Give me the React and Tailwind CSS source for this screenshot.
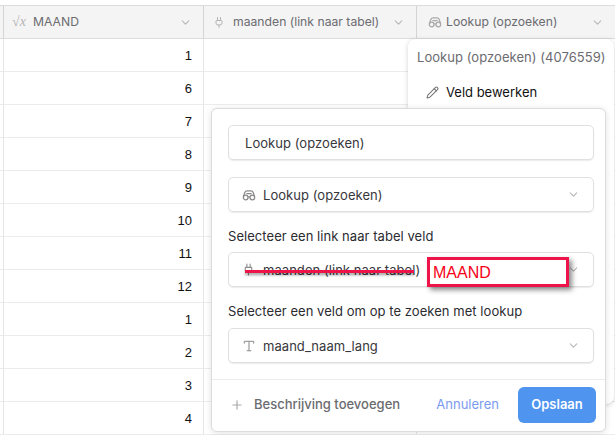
import React from 'react';
import { ChevronDown, Plug, Pencil, Plus, Type } from 'lucide-react';

const rows = [1, 6, 7, 8, 9, 10, 11, 12, 1, 2, 3, 4];

const Binoculars = ({ className }) => (
    <svg viewBox="0 0 16 16" fill="none" stroke="currentColor" strokeWidth="1.4" className={className}>
        <circle cx="4.2" cy="10.8" r="2.7" />
        <circle cx="11.8" cy="10.8" r="2.7" />
        <path d="M6.9 10.4c.7-.4 1.5-.4 2.2 0M1.6 10 3.2 5.2C3.6 4 4.5 3.4 6 3.4h4c1.5 0 2.4.6 2.8 1.8L14.4 10M5 6.4h6" />
    </svg>
);

const HeaderCell = ({ icon, label, className }) => (
    <div className={`flex items-center h-full border-r border-[#d4d4d4] pl-[9px] ${className}`}>
        <span className="w-[12px] h-[14px] mr-[8px] flex items-center justify-center text-[#b4b4b4] shrink-0">{icon}</span>
        <span className="flex-1 text-[12.2px] text-[#6b6b70] whitespace-nowrap">{label}</span>
        <ChevronDown size={13} className="text-[#b8b8b8]" />
    </div>
);

const SelectBox = ({ icon, label, className = '' }) => (
    <div className={`h-[35px] flex items-center rounded-[5px] border border-[#e0e0e0] shadow-[0_1px_1px_rgba(0,0,0,0.08)] pl-[12px] pr-[13px] ${className}`}>
        <span className="w-[15px] mr-[7px] text-[#8a8a8a] flex justify-center shrink-0">{icon}</span>
        <span className="flex-1 text-[13px] tracking-[0.05px] text-[#37373c] whitespace-nowrap pt-[2px]">{label}</span>
        <ChevronDown size={13} className="text-[#b8b8b8]" />
    </div>
);

export default function App() {
    return (
        <div className="relative w-[615px] h-[435px] overflow-hidden bg-white font-['Inter',sans-serif]">
            {/* Table */}
            <div className="pt-[5px]">
                <div className="flex h-[34px] bg-[#f4f4f4] border-y border-[#dcdcdc]">
                    <div className="w-[4px] h-full border-r border-[#d4d4d4]" />
                    <HeaderCell
                        className="w-[200px] pr-[11px]"
                        icon={<span className="font-['Liberation_Serif',serif] text-[14px] leading-none whitespace-nowrap">√<i>x</i></span>}
                        label="MAAND"
                    />
                    <HeaderCell className="w-[213px] pr-[11px]" icon={<Plug size={13} />} label="maanden (link naar tabel)" />
                    <div className="flex-1 flex items-center h-full pl-[11px] pr-[11px]">
                        <Binoculars className="w-[14px] h-[14px] text-[#a8a8a8] mr-[4px]" />
                        <span className="flex-1 text-[12.2px] text-[#6b6b70]">Lookup (opzoeken)</span>
                        <ChevronDown size={13} className="text-[#b8b8b8]" />
                    </div>
                </div>
                {rows.map((n, i) => (
                    <div key={i} className="flex h-[33px] border-b border-[#ececec]">
                        <div className="w-[4px] h-full border-r border-[#e6e6e6]" />
                        <div className="w-[200px] h-full border-r border-[#e6e6e6] flex items-center justify-end pt-[2px] pr-[11px] text-[13px] text-[#111] font-['Liberation_Sans',sans-serif]">
                            {n}
                        </div>
                        <div className="w-[213px] h-full border-r border-[#e6e6e6]" />
                    </div>
                ))}
            </div>

            {/* Column menu behind the dialog */}
            <div className="absolute left-[408px] top-[39px] w-[206px] h-[365px] bg-white rounded-[8px] shadow-[0_1px_5px_rgba(0,0,0,0.18)] pl-[9px] pt-[9px]">
                <div className="text-[13px] tracking-[0.05px] text-[#6b6b70] whitespace-nowrap">Lookup (opzoeken) (4076559)</div>
                <div className="flex items-center mt-[15px] pl-[9px]">
                    <Pencil size={13} className="text-[#77777a] mr-[7px]" />
                    <span className="text-[13px] text-[#111]">Veld bewerken</span>
                </div>
            </div>

            {/* Dialog */}
            <div className="absolute left-[211px] top-[108px] w-[395px] h-[324px] bg-white rounded-[6px] border border-[#dcdcdc] shadow-[0_1px_6px_rgba(0,0,0,0.12)] flex flex-col">
                <div className="pl-[16px] pr-[11px] pt-[16px] flex-1">
                    <div className="h-[35px] flex items-center rounded-[5px] border border-[#e0e0e0] shadow-[0_1px_1px_rgba(0,0,0,0.08)] pl-[16px] pt-[2px] text-[13px] tracking-[0.05px] text-[#37373c]">
                        Lookup (opzoeken)
                    </div>
                    <SelectBox className="mt-[17px]" icon={<Binoculars className="w-[14px] h-[14px]" />} label="Lookup (opzoeken)" />
                    <div className="mt-[16px] text-[13px] tracking-[0.05px] leading-[16px] text-[#2b2b30]">Selecteer een link naar tabel veld</div>
                    <SelectBox className="mt-[8px]" icon={<Plug size={13} />} label="maanden (link naar tabel)" />
                    <div className="mt-[16px] text-[13px] tracking-[0.05px] leading-[16px] text-[#2b2b30]">Selecteer een veld om op te zoeken met lookup</div>
                    <SelectBox className="mt-[9px]" icon={<Type size={14} strokeWidth={2.2} className="text-[#a0a0a0]" />} label="maand_naam_lang" />
                </div>
                <div className="h-[52px] border-t border-[#ececec] flex items-center pb-[2px] pl-[18px] pr-[9px]">
                    <Plus size={14} className="text-[#a8a8a8] mr-[10px]" />
                    <span className="flex-1 text-[13px] font-medium text-[#6b6b70]">Beschrijving toevoegen</span>
                    <span className="text-[13px] text-[#7b9bf0] mr-[19px]">Annuleren</span>
                    <button className="w-[78px] h-[36px] rounded-[6px] bg-[#4f94ef] text-white text-[13px] font-semibold">Opslaan</button>
                </div>
            </div>

            {/* Red annotation over the dialog */}
            <div className="absolute left-[245px] top-[270px] w-[169px] h-[3px] bg-[#ee1349] shadow-[0_2px_3px_rgba(0,0,0,0.4)]" />
            <div className="absolute left-[427px] top-[257px] w-[142px] h-[30px] bg-white border-[3px] border-[#ee1349] shadow-[3px_3px_5px_rgba(0,0,0,0.45)] pl-[3px] text-[16px] leading-[26px] text-[#f80018] font-['Liberation_Sans',sans-serif]">
                MAAND
            </div>
        </div>
    );
}
